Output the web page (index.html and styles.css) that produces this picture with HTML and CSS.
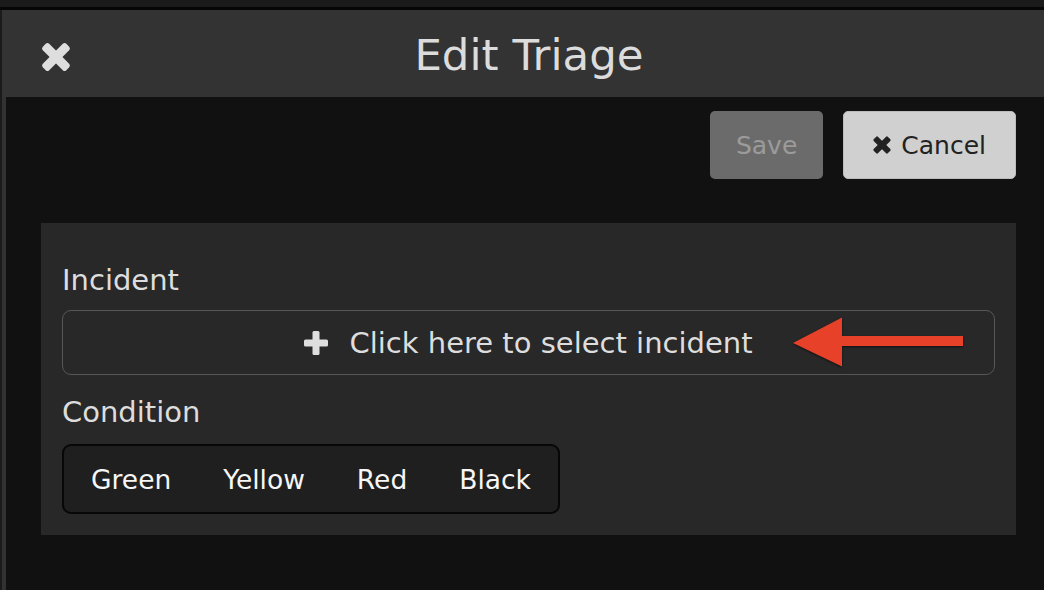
FILE: index.html
```html
<!DOCTYPE html>
<html lang="en">
<head>
    <meta charset="UTF-8">
    <meta name="viewport" content="width=device-width, initial-scale=1.0">
    <title>Edit Triage</title>
    <link rel="stylesheet" href="styles.css">
</head>
<body>
    <div class="topbar"></div>
    <div class="window">
        <header class="header">
            <button class="close-btn" title="Close">
                <svg width="30" height="30" viewBox="0 0 30 30">
                    <g transform="translate(15 15)" fill="#dedede">
                        <rect x="-4.5" y="-16.6" width="9" height="33.2" rx="2.5" transform="rotate(45)"/>
                        <rect x="-4.5" y="-16.6" width="9" height="33.2" rx="2.5" transform="rotate(-45)"/>
                    </g>
                </svg>
            </button>
            <h1>Edit Triage</h1>
            <div></div>
        </header>

        <div class="content">
            <div class="actions">
                <button class="btn btn-save" disabled>Save</button>
                <button class="btn btn-cancel">
                    <svg width="18" height="18" viewBox="0 0 30 30">
                        <g transform="translate(15 15)" fill="#222">
                            <rect x="-5" y="-16.6" width="10" height="33.2" rx="2.5" transform="rotate(45)"/>
                            <rect x="-5" y="-16.6" width="10" height="33.2" rx="2.5" transform="rotate(-45)"/>
                        </g>
                    </svg>
                    Cancel
                </button>
            </div>

            <div class="panel">
                <label class="field-label">Incident</label>
                <div class="select-wrap">
                    <button class="select-incident">
                        <svg width="24" height="24" viewBox="0 0 24 24">
                            <g fill="#dedede">
                                <rect x="8.5" y="0" width="7" height="24" rx="1.5"/>
                                <rect x="0" y="8.5" width="24" height="7" rx="1.5"/>
                            </g>
                        </svg>
                        <span>Click here to select incident</span>
                    </button>
                    <!-- annotation arrow from the screenshot -->
                    <svg class="arrow" width="176" height="56" viewBox="0 0 176 56">
                        <polygon points="3,29 52,3.5 52,22 173,22 173,32 52,32 52,52.5" fill="#e8412a"/>
                    </svg>
                </div>

                <label class="field-label">Condition</label>
                <div class="segmented">
                    <button class="segment">Green</button>
                    <button class="segment">Yellow</button>
                    <button class="segment">Red</button>
                    <button class="segment">Black</button>
                </div>
            </div>
        </div>
    </div>
</body>
</html>
```

FILE: styles.css
```css
* {
    margin: 0;
    padding: 0;
    box-sizing: border-box;
}

html, body {
    height: 100%;
}

body {
    font-family: 'DejaVu Sans', 'Lucida Grande', Verdana, sans-serif;
    background-color: #111111;
    color: #dddddd;
    overflow: hidden;
}

button {
    font-family: inherit;
    border: none;
    background: none;
    cursor: pointer;
}

.topbar {
    height: 10px;
    background-color: #1b1b1b;
    border-bottom: 3px solid #060606;
}

.window {
    height: calc(100% - 10px);
    border-left: 2px solid #1b1b1b;
    display: flex;
    flex-direction: column;
}

/* Header */
.header {
    height: 87px;
    background-color: #333333;
    display: grid;
    grid-template-columns: 1fr auto 1fr;
    align-items: center;
}

.close-btn {
    justify-self: start;
    margin-left: 39px;
    margin-top: 7px;
    display: flex;
}

.header h1 {
    font-size: 43.5px;
    font-weight: normal;
    color: #dcdcdc;
    line-height: 50px;
    padding-left: 12px;
    margin-top: 3px;
}

/* Body */
.content {
    flex: 1;
    border-left: 4px solid #323232;
    padding: 14px 28px 0 35px;
}

.actions {
    display: flex;
    justify-content: flex-end;
    gap: 20px;
    margin-bottom: 44px;
}

.btn {
    height: 68px;
    border-radius: 5px;
    font-size: 25px;
    display: flex;
    align-items: center;
    justify-content: center;
    gap: 10px;
}

.btn-save {
    background-color: #6b6b6b;
    color: #9b9b9b;
    padding: 0 26px;
    cursor: default;
}

.btn-cancel {
    background-color: #d0d0d0;
    border: 1px solid #bcbcbc;
    color: #222222;
    padding: 0 29px;
}

/* Form panel */
.panel {
    background-color: #282828;
    padding: 40px 21px 21px 21px;
}

.field-label {
    display: block;
    font-size: 29px;
    line-height: 34px;
    color: #dddddd;
    margin-bottom: 13px;
}

.select-wrap {
    position: relative;
    margin-bottom: 20px;
}

.select-incident {
    width: 100%;
    height: 65px;
    border: 1px solid #575757;
    border-radius: 9px;
    display: flex;
    align-items: center;
    justify-content: center;
    gap: 21px;
    font-size: 29px;
    color: #dddddd;
}

.arrow {
    position: absolute;
    left: 728px;
    top: 4px;
    filter: drop-shadow(0 1px 1px rgba(0, 0, 0, 0.6));
    pointer-events: none;
}

.field-label + .segmented {
    margin-top: 2px;
}

.segmented {
    display: inline-flex;
    height: 70px;
    padding: 0 1px;
    background-color: #1f1f1f;
    border: 2px solid #070707;
    border-radius: 9px;
}

.segment {
    padding: 0 26px;
    font-size: 26.5px;
    color: #f6f6f6;
}
```
